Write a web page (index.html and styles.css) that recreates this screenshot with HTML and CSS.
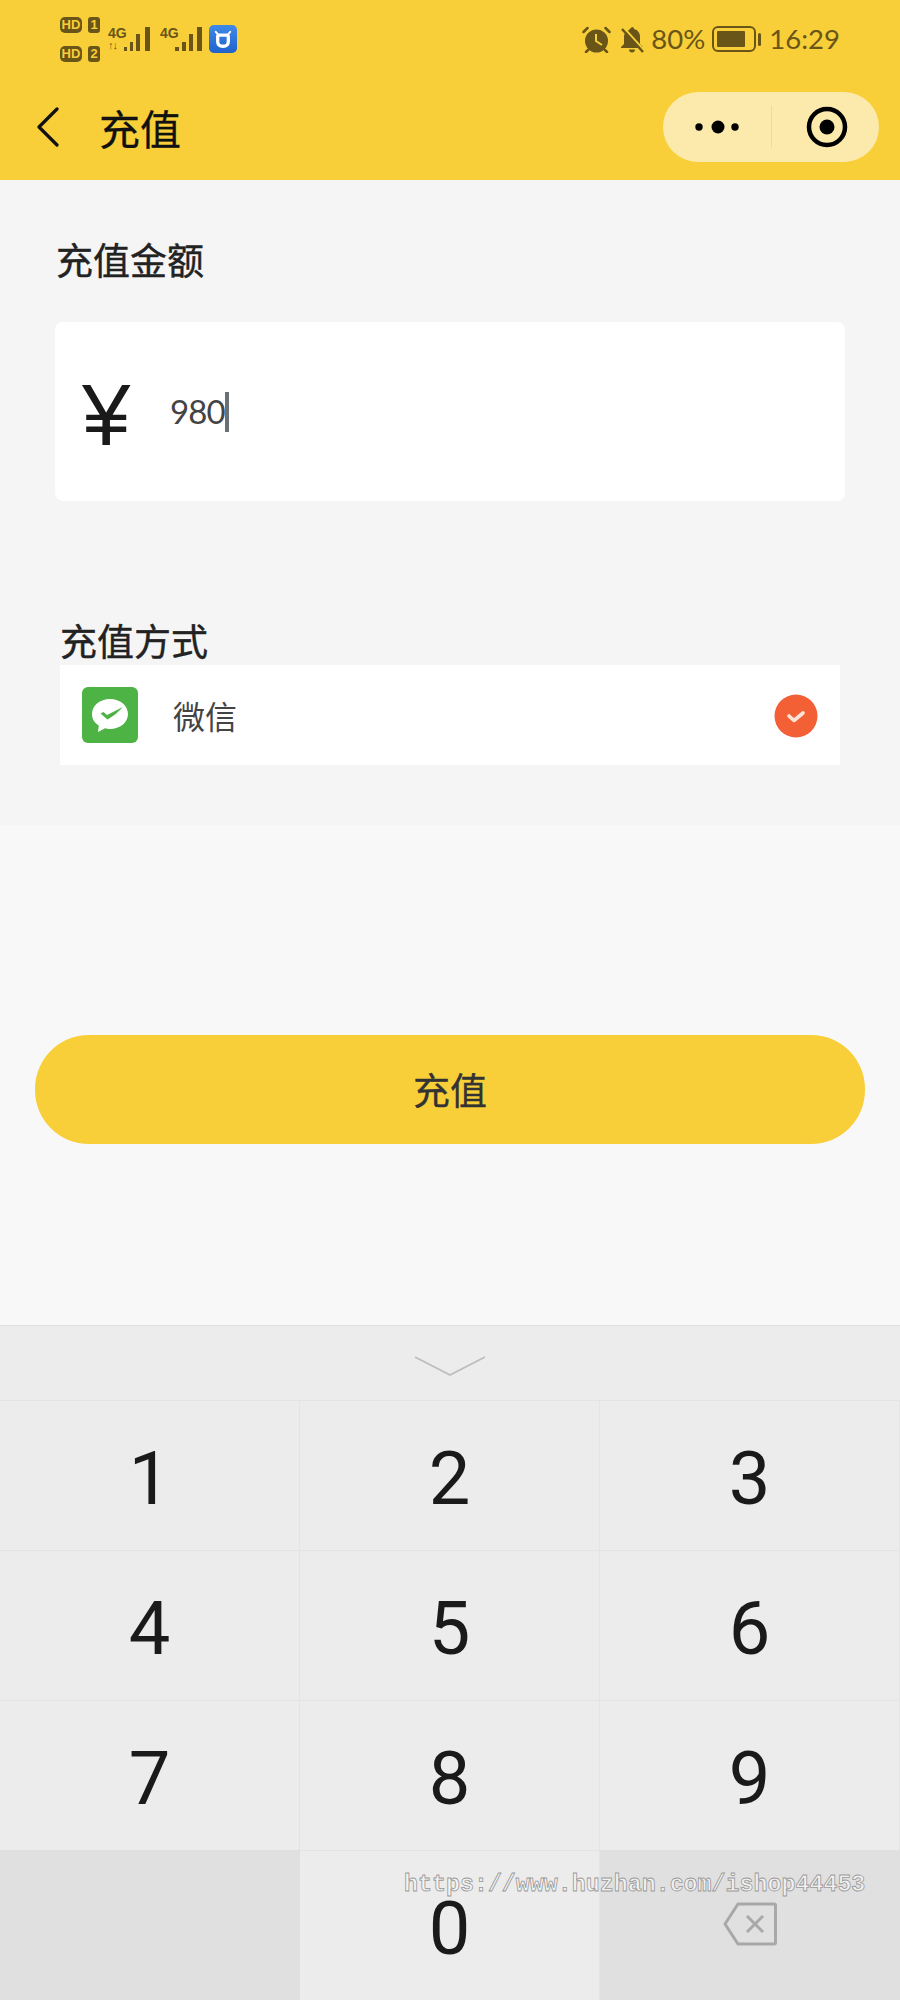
FILE: index.html
```html
<!DOCTYPE html>
<html lang="zh">
<head>
<meta charset="utf-8">
<title>充值</title>
<link rel="stylesheet" href="styles.css">
</head>
<body>
<div class="page">
  <header class="header">
    <div class="status">
      <div class="status-left">
        <div class="sims">
          <div class="sim"><span class="hd">HD</span><span class="slot">1</span></div>
          <div class="sim"><span class="hd">HD</span><span class="slot">2</span></div>
        </div>
        <div class="signal signal-one">
          <div class="net"><span>4G</span><span class="updown">↑↓</span></div>
          <svg width="26" height="24" viewBox="0 0 26 24"><path fill="#6a5518" d="M0 20h3v4H0zM6 15h3v9H6zM12 7h4v17h-4zM21 0h5v24h-5z"/></svg>
        </div>
        <div class="signal signal-two">
          <div class="net"><span>4G</span></div>
          <svg width="27" height="24" viewBox="0 0 27 24"><path fill="#6a5518" d="M0 20h4v4H0zM7 15h4v9H7zM14 7h4v17h-4zM22 0h5v24h-5z"/></svg>
        </div>
        <svg class="app-icon" width="28" height="28" viewBox="0 0 29 29">
          <defs><linearGradient id="blue" x1="0" y1="0" x2="0" y2="1"><stop offset="0" stop-color="#3f8ae8"/><stop offset="1" stop-color="#1f62cc"/></linearGradient></defs>
          <rect width="29" height="29" rx="5" fill="url(#blue)"/>
          <path fill="none" stroke="#fff" stroke-width="3.400" d="M9 12c0-1 1-1.500 2-1.500h7c1 0 2 .5 2 1.500v5c0 3-2 5-5.500 5S9 20 9 17z"/>
          <path fill="none" stroke="#fff" stroke-width="2" stroke-linecap="round" d="M7 7l2.500 3M22 7l-2.500 3"/>
        </svg>
      </div>
      <div class="status-right">
        <svg width="29" height="27" viewBox="0 0 29 27">
          <circle cx="14.500" cy="15" r="11.500" fill="#6a5518"/>
          <path fill="none" stroke="#f8cf38" stroke-width="2" d="M14 8v7l6 4"/>
          <path fill="none" stroke="#6a5518" stroke-width="2.500" stroke-linecap="round" d="M1.500 6l4-4M27.500 6l-4-4M6 24l-2 2M23 24l2 2"/>
        </svg>
        <svg class="bell" width="24" height="27" viewBox="0 0 24 27">
          <path fill="#6a5518" d="M12 1c1.300 0 2 .8 2 2 4 1 6 4 6 8v7l3 3v1H1v-1l3-3v-7c0-1 .2-2 .5-3z"/>
          <path fill="#6a5518" d="M9 23.500h6c0 2-1.300 3-3 3s-3-1-3-3z"/>
          <path stroke="#f8cf38" stroke-width="2" d="M4 2l19 21"/>
          <path stroke="#6a5518" stroke-width="2.500" d="M2 3l21 23"/>
        </svg>
        <span class="battery-pct">80%</span>
        <div class="battery"><div class="battery-body"><div class="battery-fill"></div></div><div class="battery-tip"></div></div>
        <span class="clock">16:29</span>
      </div>
    </div>
    <nav class="nav">
      <svg class="back" width="24" height="40" viewBox="0 0 24 40"><path fill="none" stroke="#111" stroke-width="3.200" stroke-linecap="round" stroke-linejoin="round" d="M22 2L4 20l18 18"/></svg>
      <h1 class="nav-title">充值</h1>
      <div class="capsule">
        <svg class="capsule-more" width="52" height="16" viewBox="0 0 52 16"><circle cx="8" cy="8" r="3.700" fill="#000"/><circle cx="27" cy="8" r="6.500" fill="#000"/><circle cx="44" cy="8" r="3.700" fill="#000"/></svg>
        <span class="capsule-divider"></span>
        <svg class="capsule-close" width="42" height="42" viewBox="0 0 42 42"><circle cx="21" cy="21" r="18" fill="none" stroke="#000" stroke-width="4.500"/><circle cx="21" cy="21" r="7.500" fill="#000"/></svg>
      </div>
    </nav>
  </header>

  <section class="form">
    <h2 class="label label-amount">充值金额</h2>
    <div class="amount-card">
      <span class="yen">¥</span>
      <span class="amount">980</span><span class="caret"></span>
    </div>
    <h2 class="label label-method">充值方式</h2>
    <div class="method">
      <svg class="wechat" width="56" height="56" viewBox="0 0 56 56">
        <rect width="56" height="56" rx="6" fill="#4cb344"/>
        <path fill="#fff" d="M28 12c10 0 18 6.500 18 15 0 8.500-8 15-18 15-2 0-3.500-.3-5-.7L16 45l.8-6.500C12.500 36 10 32 10 27c0-8.500 8-15 18-15z"/>
        <path fill="#4cb344" d="M18.500 26.500l3-1.500 3.500 3 16-8c-4 4.500-9.500 9-15.500 12.500z"/>
      </svg>
      <span class="method-name">微信</span>
      <svg class="check" width="44" height="44" viewBox="0 0 44 44"><circle cx="22" cy="22" r="21.500" fill="#f46036"/><path fill="none" stroke="#fde4da" stroke-width="3.600" stroke-linecap="round" stroke-linejoin="round" d="M15 22l5 4.500 9-7.500"/></svg>
    </div>
  </section>

  <main class="action">
    <button class="pay">充值</button>
  </main>

  <section class="keyboard">
    <div class="kb-hide">
      <svg width="72" height="22" viewBox="0 0 72 22"><path fill="none" stroke="#bdbdbd" stroke-width="1.800" d="M1 2l35 18L71 2"/></svg>
    </div>
    <div class="keys">
      <div class="key">1</div><div class="key">2</div><div class="key">3</div>
      <div class="key">4</div><div class="key">5</div><div class="key">6</div>
      <div class="key">7</div><div class="key">8</div><div class="key">9</div>
      <div class="key key-dark"></div>
      <div class="key">0</div>
      <div class="key key-dark">
        <svg width="54" height="44" viewBox="0 0 54 44"><path fill="none" stroke="#a8a8a8" stroke-width="3" stroke-linejoin="round" d="M15 2h36a1.500 1.500 0 0 1 1.500 1.500v37a1.500 1.500 0 0 1-1.500 1.500H15L2 22z"/><path fill="none" stroke="#a8a8a8" stroke-width="3" d="M24 14l16 16M40 14L24 30"/></svg>
      </div>
    </div>
  </section>

  <div class="watermark">https://www.huzhan.com/ishop44453</div>
</div>
</body>
</html>
```
FILE: styles.css
```css
* { box-sizing: border-box; }
html, body { margin: 0; padding: 0; }
body { font-family: "Noto Sans CJK SC", "Noto Sans", sans-serif; background: #f8f8f8; }
.page { position: relative; width: 900px; height: 2000px; display: flex; flex-direction: column; overflow: hidden; }

.header { height: 180px; background: #f8cf38; flex: none; }
.status { height: 74px; display: flex; justify-content: space-between; padding: 17px 60px 0 60px; color: #6a5518; }
.status-left { display: flex; align-items: flex-start; }
.sims { display: flex; flex-direction: column; gap: 13px; width: 40px; }
.sim { display: flex; gap: 6px; height: 16px; }
.hd, .slot { background: #6a5518; color: #f8cf38; font: 700 13px/16px "Liberation Sans", sans-serif; text-align: center; border-radius: 5px; }
.hd { width: 22px; }
.slot { width: 12px; border-radius: 3px; }
.signal { display: flex; height: 24px; margin-top: 10px; }
.signal-one { margin-left: 8px; }
.signal-two { margin-left: 10px; }
.net { display: flex; flex-direction: column; font: 700 14px/13px "Liberation Sans Narrow", "Liberation Sans", sans-serif; width: 16px; }
.signal-two .net { width: 15px; }
.updown { font-size: 11px; line-height: 11px; white-space: nowrap; letter-spacing: -1px; }
.app-icon { margin: 8px 0 0 7px; }
.status-right { display: flex; align-items: center; height: 44px; font: 400 27.500px/44px Lato, "Noto Sans", sans-serif; }
.bell { margin-left: 9px; }
.battery-pct { margin-left: 7px; }
.battery { display: flex; align-items: center; margin-left: 7px; }
.battery-body { width: 44px; height: 26px; border: 2.500px solid #6a5518; border-radius: 6px; padding: 3px; }
.battery-fill { width: 80%; height: 100%; background: #6a5518; border-radius: 1px; }
.battery-tip { width: 3px; height: 13px; background: #6a5518; margin-left: 2px; border-radius: 2px; }
.clock { margin-left: 8px; }

.nav { height: 106px; display: flex; align-items: center; padding-left: 35px; }
.back { flex: none; }
.nav-title { margin: 0 0 0 40px; font-size: 41px; font-weight: 400; line-height: 60px; color: #111; -webkit-text-stroke: .3px #111; }
.capsule { margin-left: auto; margin-right: 21px; width: 216px; height: 70px; background: #fbeaab; border-radius: 35px; display: flex; align-items: center; padding-left: 28px; }
.capsule-more { flex: none; }
.capsule-divider { width: 1px; height: 42px; background: #ecdc9c; margin-left: 28px; }
.capsule-close { flex: none; margin-left: 34px; }

.form { height: 645px; flex: none; background: #f5f5f5; padding: 0 55px; }
.label { margin: 0; font-size: 37px; font-weight: 400; line-height: 50px; color: #222; -webkit-text-stroke: .4px #222; }
.label-amount { padding: 54px 0 0 1px; height: 142px; }
.amount-card { height: 179px; background: #fff; border-radius: 8px; display: flex; align-items: center; padding-left: 27px; }
.yen { width: 88px; font: 400 87px/88px "Liberation Sans", sans-serif; color: #1a1a1a; padding-top: 6px; }
.amount { font: 400 33px/40px Lato, sans-serif; color: #444; letter-spacing: -.9px; margin-top: -2px; }
.caret { width: 4px; height: 40px; background: #6b7075; }
.label-method { margin: 116px 0 0 5px; height: 48px; line-height: 46px; }
.method { margin: 0 5px; height: 100px; background: #fff; display: flex; align-items: center; padding-left: 22px; padding-right: 22px; }
.method-name { margin-left: 35px; font-size: 32px; line-height: 40px; color: #444; }
.check { margin-left: auto; margin-top: 1px; }

.action { height: 500px; flex: none; background: #f8f8f8; padding: 210px 35px 0; }
.pay { display: block; width: 100%; height: 109px; border: 0; border-radius: 54px; background: #f8cf38; color: #333; font: 400 37px/109px "Noto Sans CJK SC", sans-serif; padding: 0; -webkit-text-stroke: .3px #333; }

.keyboard { height: 675px; flex: none; background: #ececec; border-top: 1px solid #e0e0e0; }
.kb-hide { height: 74px; display: flex; justify-content: center; padding-top: 29px; }
.keys { display: grid; grid-template-columns: 300px 300px 300px; grid-auto-rows: 150px; }
.key { display: flex; align-items: center; justify-content: center; font: 400 74px/56px Roboto, sans-serif; color: #1a1a1a; border-top: 1px solid #e4e4e4; border-right: 1px solid #e4e4e4; padding-top: 7px; }
.key-dark { background: #e0e0e0; border-right: 0; border-top: 0; padding-top: 0; }
.key-dark svg { margin-bottom: 2px; }

.watermark { position: absolute; left: 404px; top: 1874px; font: 700 23.300px/22px "Liberation Mono", monospace; white-space: nowrap; color: rgba(245,245,245,.85); -webkit-text-stroke: .8px #999; }
```
